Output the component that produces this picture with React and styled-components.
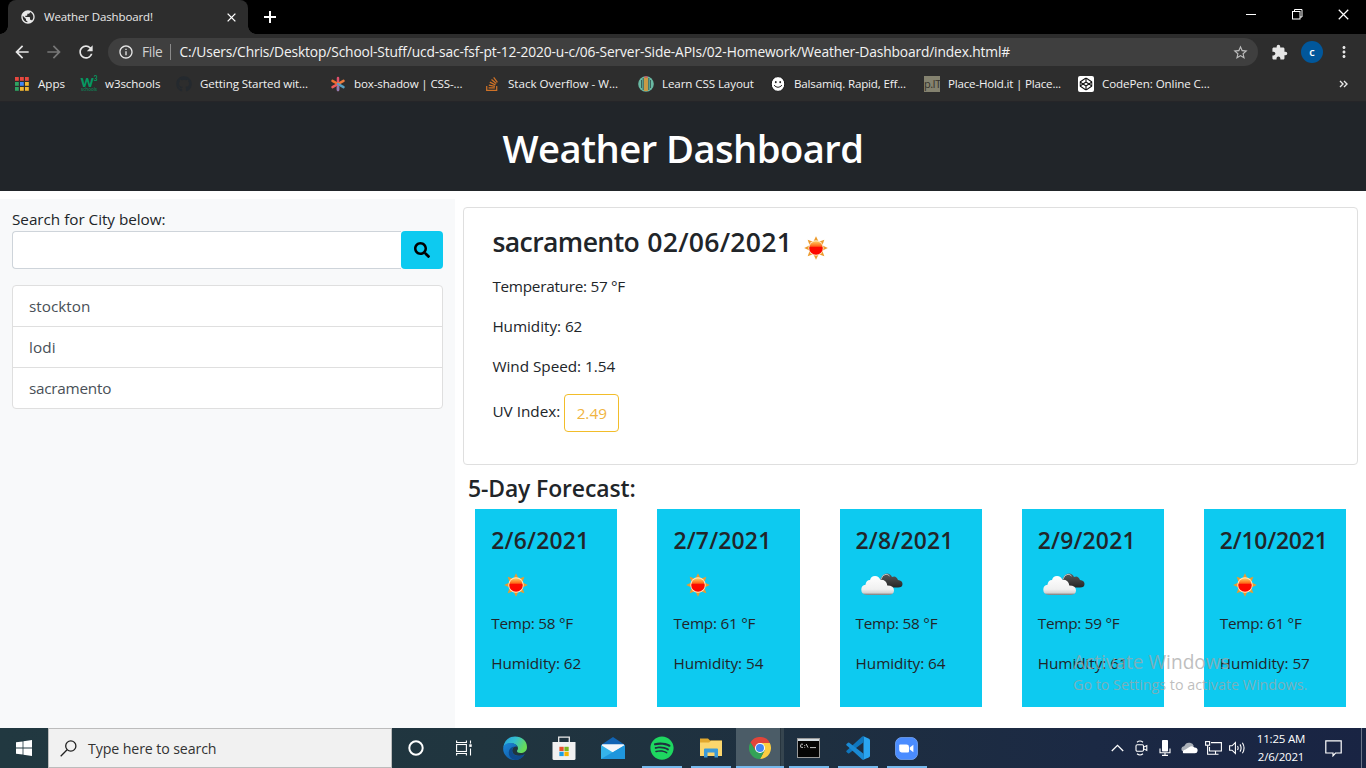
import React from "react";
import styled, { createGlobalStyle } from "styled-components";
import { FaSearch, FaStackOverflow, FaGithub, FaSpotify, FaCodepen } from "react-icons/fa";
import { MdArrowBack, MdArrowForward, MdRefresh, MdExtension, MdStarBorder, MdMoreVert, MdInfoOutline, MdPublic } from "react-icons/md";

const Global = createGlobalStyle`
  *, *::before, *::after { box-sizing: border-box; }
  html, body { margin: 0; padding: 0; }
  body {
    font-family: "Open Sans", "Noto Sans", "Liberation Sans", sans-serif;
    overflow: hidden;
    background: #fff;
  }
  svg { display: block; flex: none; }
  p, h1, h2, h3, h4 { margin: 0; }
`;

const Screen = styled.div`
  width: 1366px;
  height: 768px;
  display: flex;
  flex-direction: column;
  overflow: hidden;
  position: relative;
`;

/* ---------- Browser window ---------- */

const TabStrip = styled.div`
  height: 34px;
  background: #000;
  display: flex;
  align-items: stretch;
  padding-left: 8px;
`;

const Tab = styled.div`
  width: 240px;
  background: #2d2d2d;
  border-radius: 8px 8px 0 0;
  display: flex;
  align-items: center;
  padding: 0 12px 0 12px;
  color: #e9e9e9;
  position: relative;
  &::before, &::after {
    content: "";
    position: absolute;
    bottom: 0;
    width: 8px;
    height: 8px;
  }
  &::before { left: -8px; background: radial-gradient(circle at 0 0, #000 7.5px, #2d2d2d 8px); }
  &::after { right: -8px; background: radial-gradient(circle at 100% 0, #000 7.5px, #2d2d2d 8px); }
`;

const TabTitle = styled.span`
  flex: 1;
  margin-left: 8px;
  font-size: 11.5px;
  line-height: 16px;
  letter-spacing: -0.13px;
  white-space: nowrap;
`;

const NewTab = styled.div`
  width: 44px;
  display: flex;
  align-items: center;
  justify-content: center;
`;

const WindowButtons = styled.div`
  margin-left: auto;
  display: flex;
  height: 29px;
`;

const WindowButton = styled.div`
  width: 46px;
  display: flex;
  align-items: center;
  justify-content: center;
`;

const Toolbar = styled.div`
  height: 35px;
  background: #2d2d2d;
  display: flex;
  align-items: center;
  padding: 1px 12px 0 12px;
  color: #e6e6e6;
`;

const NavButton = styled.div`
  width: 20px;
  height: 20px;
  margin-right: 12px;
  color: ${(p) => (p.$dim ? "#777" : "#e6e6e6")};
  display: flex;
  align-items: center;
  justify-content: center;
`;

const AddressBar = styled.div`
  width: 1150px;
  height: 28px;
  border-radius: 14px;
  background: #3f3f3f;
  display: flex;
  align-items: center;
  padding: 0 9px 0 10px;
  font-size: 13.8px;
  white-space: nowrap;
`;

const Scheme = styled.span`
  margin-left: 8px;
  padding-right: 8px;
  border-right: 1px solid #8a8a8a;
  line-height: 16px;
  color: #d0d0d0;
  letter-spacing: -0.35px;
`;

const Url = styled.span`
  flex: 1;
  margin-left: 8px;
  padding-bottom: 1px;
  line-height: 18px;
  letter-spacing: -0.15px;
  color: #f3f3f3;
`;

const ToolbarActions = styled.div`
  flex: 1;
  display: flex;
  align-items: center;
  padding-left: 13px;
`;

const Avatar = styled.div`
  width: 22px;
  height: 22px;
  border-radius: 50%;
  margin: 0 12px 0 13px;
  background: #01579b;
  color: #fff;
  font-size: 11px;
  line-height: 21px;
  text-align: center;
  font-weight: 600;
`;

const BookmarksBar = styled.div`
  height: 33px;
  background: #2d2d2d;
  border-bottom: 1px solid #252528;
  display: flex;
  align-items: center;
  padding: 0 18px 3px 14px;
`;

const Bookmark = styled.div`
  width: ${(p) => p.$width}px;
  display: flex;
  align-items: center;
  gap: 8px;
  color: #f1f1f1;
  font-size: 11.6px;
  letter-spacing: ${(p) => p.$tracking || 0}px;
  line-height: 16px;
  white-space: nowrap;
`;

const PlaceholdIcon = styled.span`
  width: 16px;
  height: 16px;
  background: #84826f;
  color: #34322b;
  font: 11px/16px "Open Sans", sans-serif;
  letter-spacing: -0.5px;
  text-align: center;
`;

const Overflow = styled.span`
  margin-left: auto;
`;

/* ---------- Weather page ---------- */

const Page = styled.div`
  height: 626px;
  background: #fff;
  color: #212529;
  font-size: 15.3px;
  line-height: 24px;
  display: flex;
  flex-direction: column;
`;

const Banner = styled.header`
  height: 89px;
  background: #212529;
  color: #fff;
  display: flex;
  align-items: center;
  justify-content: center;
  padding-top: 2px;
  margin-bottom: 8px;
`;

const BannerTitle = styled.h1`
  font-size: 38.2px;
  font-weight: 600;
  line-height: 48px;
  letter-spacing: -0.56px;
`;

const Columns = styled.div`
  flex: 1;
  display: grid;
  grid-template-columns: 455px 1fr;
`;

const Sidebar = styled.aside`
  background: #f8f9fa;
  padding: 8px 12px;
`;

const SearchLabel = styled.div`
  letter-spacing: -0.04px;
`;

const SearchRow = styled.div`
  display: flex;
  margin-bottom: 16px;
`;

const CityInput = styled.input`
  flex: 1;
  height: 38px;
  border: 1px solid #ced4da;
  border-right: 0;
  border-radius: 4px 0 0 4px;
  background: #fff;
  outline: none;
`;

const SearchButton = styled.button`
  width: 42px;
  height: 38px;
  border: 0;
  padding: 0;
  border-radius: 4px;
  background: #0dcaf0;
  color: #000;
  display: flex;
  align-items: center;
  justify-content: center;
`;

const CityList = styled.div`
  border: 1px solid #dfdfdf;
  border-radius: 4px;
  background: #fff;
`;

const City = styled.div`
  height: 41px;
  padding: 8px 16px;
  color: #495057;
  letter-spacing: ${(p) => p.$tracking}px;
  &:not(:last-child) { border-bottom: 1px solid #dfdfdf; }
  &:last-child { height: 40px; }
`;

const Main = styled.main`
  padding: 8px 8px 0;
`;

const TodayCard = styled.section`
  height: 258px;
  border: 1px solid #dfdfdf;
  border-radius: 4px;
  padding: 15px 28px 0 28.4px;
`;

const TodayTitle = styled.h3`
  display: flex;
  align-items: center;
  height: 49px;
  margin-bottom: 2px;
  font-size: 26.6px;
  font-weight: 600;
`;

const TodayCity = styled.span`
  padding-bottom: 11px;
  margin-right: 8px;
  letter-spacing: -0.6px;
`;

const TodayDate = styled.span`
  padding-bottom: 11px;
  width: 144.1px;
  letter-spacing: 0.25px;
`;

const Reading = styled.p`
  margin-bottom: 16px;
  letter-spacing: ${(p) => p.$tracking || 0}px;
`;

const UvRow = styled.div`
  display: flex;
`;

const UvLabel = styled.span`
  line-height: 35px;
  margin-right: 4px;
`;

const UvBadge = styled.span`
  width: 55px;
  height: 38px;
  border: 1px solid #f2bd2a;
  border-radius: 4px;
  color: #f0b440;
  line-height: 37px;
  text-align: center;
`;

const ForecastTitle = styled.h4`
  padding: 8px 0 0 5px;
  height: 44px;
  font-size: 22.9px;
  line-height: 32px;
  font-weight: 600;
  letter-spacing: -0.1px;
`;

const ForecastGrid = styled.div`
  display: grid;
  grid-template-columns: repeat(5, 1fr);
  gap: 40px;
  padding: 0 12px 0 12.3px;
`;

const DayCard = styled.article`
  height: 198px;
  background: #0dcaf0;
  padding: 16px 0 0 16px;
  white-space: nowrap;
`;

const DayTitle = styled.h4`
  font-size: 22.9px;
  line-height: 32px;
  height: 36px;
  font-weight: 600;
  letter-spacing: ${(p) => p.$tracking || 0}px;
  & + svg { margin-top: -1px; margin-bottom: 1px; }
`;

/* ---------- Watermark ---------- */

const Watermark = styled.div`
  position: absolute;
  left: 1073px;
  top: 650px;
  color: rgba(165, 165, 165, 0.72);
  white-space: nowrap;
  pointer-events: none;
`;

const WatermarkTitle = styled.div`
  font-size: 19.1px;
  line-height: 25px;
`;

const WatermarkNote = styled.div`
  font-size: 14.3px;
  line-height: 20px;
`;

/* ---------- Taskbar ---------- */

const Taskbar = styled.footer`
  height: 40px;
  background: linear-gradient(90deg, #213840 0%, #20353f 35%, #1e2f40 60%, #1b2944 80%, #192443 100%);
  display: flex;
  color: #fff;
`;

const TaskCell = styled.div`
  width: ${(p) => p.$width || 49}px;
  height: 40px;
  position: relative;
  display: flex;
  align-items: center;
  justify-content: center;
  background: ${(p) => (p.$active ? "linear-gradient(90deg,transparent 0 1px,#4b5c67 1px 45px,#27353f 45px 46px,#36454f 46px)" : "none")};
  ${(p) => p.$active && "padding-left: 1px;"}
  &::after {
    content: "";
    display: ${(p) => (p.$running ? "block" : "none")};
    position: absolute;
    bottom: 0;
    left: ${(p) => (p.$active ? 1 : 5)}px;
    right: ${(p) => (p.$active ? 0 : 4)}px;
    height: 2px;
    background: #76b9ed;
  }
`;

const TaskSearch = styled.div`
  width: 344px;
  height: 40px;
  margin-right: ${(p) => p.$gap || 0}px;
  background: #f1f1f1;
  border: 1px solid #bcbcbc;
  display: flex;
  align-items: center;
  padding-left: 11px;
  gap: 11px;
  color: #333;
  font-size: 14.2px;
  letter-spacing: -0.11px;
`;

const PinnedApps = styled.div`
  display: flex;
  margin-left: 2px;
`;

const Tray = styled.div`
  margin-left: auto;
  display: flex;
  align-items: center;
`;

const TrayIcon = styled.div`
  width: 24px;
  display: flex;
  justify-content: center;
`;

const Clock = styled.div`
  width: 64px;
  text-align: center;
  font-size: 11.5px;
  line-height: 18px;
  letter-spacing: -0.2px;
  white-space: nowrap;
`;

const ActionCenter = styled.div`
  width: 48px;
  height: 40px;
  display: flex;
  align-items: center;
  justify-content: center;
  padding-right: 8px;
`;

const ShowDesktop = styled.div`
  width: 5px;
  height: 40px;
  border-left: 1px solid #6c7488;
`;

/* ---------- Drawings ---------- */

const Sun = () => (
  <svg width="50" height="50" viewBox="0 0 50 50">
    <defs>
      <linearGradient id="sunFill" x1="0" y1="0" x2="0" y2="1">
        <stop offset="0" stopColor="#ffd060" />
        <stop offset="0.36" stopColor="#ff6a1a" />
        <stop offset="0.46" stopColor="#fb0d00" />
        <stop offset="1" stopColor="#ff0600" />
      </linearGradient>
    </defs>
    <g fill="#ec9b2d">
      {[0, 45, 90, 135, 180, 225, 270, 315].map((a) => (
        <path key={a} d="M25 13.2 L27.5 18.5 L22.5 18.5 Z" transform={`rotate(${a} 25 25)`} />
      ))}
    </g>
    <circle cx="25" cy="25" r="7.7" fill="#fde9c8" />
    <circle cx="25" cy="25" r="6.8" fill="url(#sunFill)" />
  </svg>
);

const Clouds = () => (
  <svg width="50" height="50" viewBox="0 0 50 50">
    <defs>
      <linearGradient id="cloudFill" x1="0" y1="0" x2="0" y2="1">
        <stop offset="0" stopColor="#fff" />
        <stop offset="0.7" stopColor="#f0f0f0" />
        <stop offset="0.88" stopColor="#d5d5d5" />
        <stop offset="1" stopColor="#777" />
      </linearGradient>
      <linearGradient id="darkFill" x1="0" y1="0" x2="0" y2="1">
        <stop offset="0" stopColor="#5a5a5a" />
        <stop offset="1" stopColor="#262626" />
      </linearGradient>
    </defs>
    <path d="M24 21 Q26 13.5 31 13.5 Q34.5 13.5 36 17 Q40 15 42 20 Q46.5 20.5 46.5 24 Q46.5 27.5 42 27.5 H28 Z" fill="url(#darkFill)" />
    <path d="M24.8 19.5 Q26.5 14.3 30 14.3 Q32 14.2 33.5 16" fill="none" stroke="#d9d9d9" strokeWidth="0.8" />
    <path d="M11 35 Q5.3 34.6 5.3 29.7 Q5.3 25.2 9.5 24.8 Q10 20 14 20 Q15 16 19 16 Q23 16 24.3 19.8 Q30.5 19.5 31.3 25.6 Q38 25.6 38 30.5 Q38 34.6 33 35 Z" fill="url(#cloudFill)" />
  </svg>
);

const AppsIcon = () => {
  const colors = ["#e8483f", "#e8483f", "#e8483f", "#2fa362", "#4285f4", "#f2b632", "#2fa362", "#f2b632", "#f2b632"];
  return (
    <svg width="16" height="16" viewBox="0 0 16 16">
      {colors.map((c, i) => (
        <rect key={i} x={1 + (i % 3) * 5} y={1 + Math.floor(i / 3) * 5} width="3.8" height="3.8" fill={c} />
      ))}
    </svg>
  );
};

const SchoolsIcon = () => (
  <svg width="16" height="17" viewBox="0 0 16 17" fill="#059862" overflow="visible">
    <text x="-0.4" y="11.5" fontFamily="Lato, sans-serif" fontWeight="900" fontSize="16.5" textLength="13.2" lengthAdjust="spacingAndGlyphs">w</text>
    <text x="12.6" y="5.6" fontFamily="Lato, sans-serif" fontWeight="700" fontSize="7">3</text>
    <text x="0" y="16.4" fontFamily="Open Sans, sans-serif" fontWeight="600" fontSize="5" fillOpacity="0.8" textLength="16" lengthAdjust="spacingAndGlyphs">schools</text>
  </svg>
);

const StarMark = () => (
  <svg width="16" height="16" viewBox="0 0 16 16" strokeWidth="2.5" strokeLinecap="round">
    <path d="M8 2v12" stroke="#e0506c" />
    <path d="M2.5 4.8L8 8" stroke="#f0702e" />
    <path d="M13.5 4.8L8 8" stroke="#ef7a3c" />
    <path d="M2.5 11.2L8 8" stroke="#ee5a5a" />
    <path d="M13.5 11.2L8 8" stroke="#5a9fc0" />
    <path d="M8 11v3" stroke="#8d7db0" />
  </svg>
);

const LearnIcon = () => (
  <svg width="16" height="16" viewBox="0 0 16 16">
    <circle cx="8" cy="8" r="7.8" fill="#69b9a3" />
    <rect x="6" y="1" width="4" height="14" fill="#c99a45" />
    <path d="M3.5 4v8M5.2 2v12M10.8 2v12M12.5 4v8" stroke="#35544f" strokeWidth="0.9" />
    <path d="M6.5 1h3" stroke="#c8536b" strokeWidth="1.5" />
  </svg>
);

const Smiley = () => (
  <svg width="16" height="16" viewBox="0 0 16 16">
    <ellipse cx="8" cy="8" rx="6.8" ry="7.4" fill="#fff" stroke="#111" />
    <ellipse cx="5.8" cy="6.2" rx="0.9" ry="1.1" fill="#222" />
    <ellipse cx="10.2" cy="6.2" rx="0.9" ry="1.1" fill="#222" />
    <path d="M4 9.2 Q8 13.4 12 9.2" fill="none" stroke="#222" />
  </svg>
);

const CodepenBox = () => (
  <svg width="16" height="16" viewBox="0 0 16 16">
    <rect width="16" height="16" rx="2" fill="#fff" />
    <FaCodepen x="1.5" y="1.5" size={13} color="#111" />
  </svg>
);

const CloseIcon = ({ size = 9, stroke = 1.5 }) => (
  <svg width={size} height={size} viewBox="0 0 10 10" stroke="#fff" strokeWidth={stroke}>
    <path d="M0.7 0.7L9.3 9.3M9.3 0.7L0.7 9.3" />
  </svg>
);

const PlusIcon = () => (
  <svg width="12" height="12" viewBox="0 0 12 12" stroke="#fff" strokeWidth="2">
    <path d="M6 0v12M0 6h12" />
  </svg>
);

const MinimizeIcon = () => (
  <svg width="10" height="10" viewBox="0 0 10 10" stroke="#fff"><path d="M0 4.5h10" /></svg>
);

const RestoreIcon = () => (
  <svg width="11" height="11" viewBox="0 0 11 11" stroke="#fff" fill="none">
    <rect x="0.5" y="2.5" width="7.5" height="7.5" />
    <path d="M2.5 2.5v-2h7.5v7.5h-2" />
  </svg>
);

const WindowsLogo = () => (
  <svg width="16" height="16" viewBox="0 0 16 16" fill="#fff">
    <path d="M0 2.3L6.6 1.4V7.6H0ZM7.4 1.3L16 0V7.6H7.4ZM0 8.4H6.6V14.6L0 13.7ZM7.4 8.4H16V16L7.4 14.8Z" />
  </svg>
);

const LoupeIcon = () => (
  <svg width="17" height="17" viewBox="0 0 17 17" fill="none" stroke="#222" strokeWidth="1.3">
    <circle cx="10.8" cy="6" r="5.1" />
    <path d="M7.1 9.8L0.7 16.2" />
  </svg>
);

const CortanaIcon = () => (
  <svg width="16" height="16" viewBox="0 0 16 16"><circle cx="8" cy="8" r="6.7" fill="none" stroke="#fff" strokeWidth="2" /></svg>
);

const TaskViewIcon = () => (
  <svg width="16" height="16" viewBox="0 0 16 16" fill="none" stroke="#fff" strokeWidth="1.1">
    <rect x="0.6" y="4.5" width="9.8" height="7" />
    <path d="M0.6 0.5V2.5H10.4V0.5M0.6 15.5V13.5H10.4V15.5M14.5 0.5v3M14.5 8.5v7" />
    <rect x="13.3" y="4.3" width="2.4" height="2.6" fill="#fff" stroke="none" />
  </svg>
);

const EdgeIcon = () => (
  <svg width="24" height="24" viewBox="0 0 24 24">
    <defs>
      <linearGradient id="edgeTop" x1="0" y1="0" x2="1" y2="0.4">
        <stop offset="0" stopColor="#249fe0" /><stop offset="0.5" stopColor="#35bfcf" /><stop offset="1" stopColor="#67dc58" />
      </linearGradient>
      <linearGradient id="edgeBase" x1="0" y1="0" x2="1" y2="1">
        <stop offset="0" stopColor="#1b86d8" /><stop offset="1" stopColor="#0c4f96" />
      </linearGradient>
    </defs>
    <path d="M0.3 11 C1.5 4 6 0.5 12 0.5 C19 0.5 24 5 24 11 C24 15 21 17 17.5 17 C15 17 13.8 16 14 14.8 C16.5 12 14 7.5 9 7.5 C5 7.5 1.5 9 0.3 11Z" fill="url(#edgeTop)" />
    <path d="M0.2 12 C0.5 8.5 4 7 7.3 7 C11 7 13.8 8.6 14.5 11 C12 9.8 9.2 11.5 9.2 14.6 C9.2 18.5 14 22 21.7 18.2 C19.5 21.8 16 24 12 24 C5 24 -0.3 18.5 0.2 12Z" fill="url(#edgeBase)" />
    <path d="M9.2 14.5C9 18.5 14 22 21.7 18.2 C19.5 21.8 16 24 12 24 C8 23 5.5 20 5.8 16 C6 13.5 8 11 11 10.6 C9.8 11.5 9.2 13 9.2 14.5Z" fill="#0f4a8c" />
  </svg>
);

const StoreIcon = () => (
  <svg width="24" height="24" viewBox="0 0 24 24">
    <path d="M6.7 6.5V1.2H17.3V6.5" fill="none" stroke="#ececec" strokeWidth="1.3" />
    <path d="M0.5 6H23.5V22.5Q23.5 24 22 24H2Q0.5 24 0.5 22.5Z" fill="#f1f1f1" />
    <rect x="7.4" y="10.8" width="4.3" height="4.3" fill="#e5502b" />
    <rect x="12.4" y="10.8" width="4.3" height="4.3" fill="#7ab51d" />
    <rect x="7.4" y="15.8" width="4.3" height="4.3" fill="#1c9ee5" />
    <rect x="12.4" y="15.8" width="4.3" height="4.3" fill="#f5b400" />
  </svg>
);

const MailIcon = () => (
  <svg width="24" height="24" viewBox="0 0 24 24">
    <path d="M0 9L12 1L24 9V13H0Z" fill="#1164b4" />
    <path d="M1 8.5H23V16L12 19L1 16Z" fill="#f4f7fa" />
    <path d="M0 9L12 16.5L24 9V23H0Z" fill="#35b3ea" />
    <path d="M24 9L0 23H24Z" fill="#1f96dc" />
    <path d="M1 8.6H23L12 15.6Z" fill="#f4f7fa" />
  </svg>
);

const FolderIcon = () => (
  <svg width="22" height="20" viewBox="0 0 22 20">
    <path d="M0 0.5H8L10 2.5H22V18H0Z" fill="#e2a82e" />
    <path d="M0 4.5H9L11 2.8H22V18H0Z" fill="#fbd66d" />
    <path d="M4 19.5V11.5Q4 10.5 5 10.5H17Q18 10.5 18 11.5V19.5H14.5V14.5H7.5V19.5Z" fill="#3a9ad9" />
  </svg>
);

const ChromeIcon = () => (
  <svg width="22" height="22" viewBox="0 0 24 24">
    <path d="M12 6.5H22.7A12 12 0 0 1 12 24L17 14.8Z" fill="#fccd41" />
    <path d="M7.2 14.8L1.6 6A12 12 0 0 1 22.7 6.5H12Z" fill="#e1453a" />
    <path d="M7.2 14.8L1.6 6A12 12 0 0 0 12 24L17 14.8Z" fill="#34a257" />
    <circle cx="12" cy="12" r="5.5" fill="#fff" />
    <circle cx="12" cy="12" r="4.4" fill="#4285f4" />
  </svg>
);

const TerminalIcon = () => (
  <svg width="23" height="20" viewBox="0 0 23 20">
    <rect x="0.5" y="0.5" width="22" height="19" fill="#050505" stroke="#9a9a9a" />
    <rect x="1" y="1" width="21" height="2" fill="#d5dde2" />
    <path d="M6 6.2H4.4Q3.6 6.2 3.6 8T4.4 9.4H6M7.7 7v.9M7.7 8.9v.8M9.2 6L11 9.6M13 9.6h6" stroke="#ddd" fill="none" strokeWidth="0.9" />
  </svg>
);

const CodeIcon = () => (
  <svg width="24" height="24" viewBox="0 0 24 24">
    <path d="M17.5 0.2L23 2.7Q24 3.2 24 4.3V19.7Q24 20.8 23 21.3L17.5 23.8Z" fill="#2aa5f0" />
    <path d="M17.5 6.2L3.3 17.3Q2.6 17.8 2 17.3L0.5 16Q0 15.3 0.5 14.7L16.2 0.5Q17 -0.1 18 0.4Z" fill="#0f76bd" />
    <path d="M17.5 17.8L3.3 6.7Q2.6 6.2 2 6.7L0.5 8Q0 8.7 0.5 9.3L16.2 23.5Q17 24.1 18 23.6Z" fill="#1a8ad4" />
  </svg>
);

const MeetingIcon = () => (
  <svg width="23" height="23" viewBox="0 0 23 23">
    <rect x="0.4" y="0.4" width="22.2" height="22.2" rx="6.5" fill="#4a8cff" stroke="#7aa9f8" strokeWidth="0.8" />
    <path d="M4.2 8.3Q4.2 7.6 5 7.6H11.5Q14 7.6 14 10V14.6Q14 15.4 13.2 15.4H6.7Q4.2 15.4 4.2 13Z" fill="#fff" />
    <path d="M14.8 10.4L18.4 7.8V15.2L14.8 12.6Z" fill="#fff" />
  </svg>
);

const ChevronIcon = () => (
  <svg width="13" height="8" viewBox="0 0 13 8" fill="none" stroke="#fff" strokeWidth="1.3"><path d="M0.8 7L6.5 1.3L12.2 7" /></svg>
);

const CameraIcon = () => (
  <svg width="13" height="16" viewBox="0 0 13 16" fill="none" stroke="#fff" strokeWidth="1.1">
    <rect x="1" y="4.8" width="7.5" height="6.4" rx="1.2" />
    <path d="M8.5 7.2L11.8 5.6V10.4L8.5 8.8M2 2.2Q5 -0.2 8 2.2M2 13.8Q5 16.2 8 13.8" />
  </svg>
);

const MicIcon = () => (
  <svg width="12" height="16" viewBox="0 0 12 16">
    <rect x="3" y="0" width="6" height="11.5" rx="0.8" fill="#fff" />
    <path d="M1 8.5V12.8H11V8.5M6 13V15.5M3 15.4H9" fill="none" stroke="#fff" strokeWidth="1.1" />
  </svg>
);

const CloudIcon = () => (
  <svg width="17" height="12" viewBox="0 0 17 12">
    <path d="M1 9Q-1 5 3.3 4Q5 0 9 0.8Q12 1.3 12.8 4L8 9Z" fill="#aab0b8" />
    <path d="M2 11Q1 8 4.5 7.4L8 5.3Q11 3.2 13.5 5.6Q17 6 16.6 9Q16.2 11.3 14 11.3H3.5Q2.3 11.3 2 11Z" fill="#fff" />
  </svg>
);

const NetworkIcon = () => (
  <svg width="17" height="14" viewBox="0 0 17 14" fill="none" stroke="#fff" strokeWidth="1.1">
    <rect x="0.6" y="0.6" width="4" height="3.6" />
    <path d="M6 1.6H16.4V10H4.5V6M2.6 4.2V13.2H6.5M10.5 10V13M6.5 13.2H13.5" />
  </svg>
);

const SpeakerIcon = () => (
  <svg width="17" height="14" viewBox="0 0 17 14" fill="none" stroke="#fff" strokeWidth="1.1">
    <path d="M0.6 4.8H3L6.4 1.6V12.4L3 9.2H0.6Z" />
    <path d="M8.5 5Q9.8 7 8.5 9M11 3.4Q13.2 7 11 10.6M13.4 1.7Q16.7 7 13.4 12.3" />
  </svg>
);

const NotificationIcon = () => (
  <svg width="17" height="17" viewBox="0 0 17 17" fill="none" stroke="#fff" strokeWidth="1.2">
    <path d="M0.8 0.8H16.2V13H10.5L8 15.8V13H0.8Z" />
  </svg>
);

/* ---------- Data ---------- */

const bookmarks = [
  { label: "Apps", width: 67, icon: <AppsIcon /> },
  { label: "w3schools", width: 95, tracking: -0.1, icon: <SchoolsIcon /> },
  { label: "Getting Started wit...", width: 154, tracking: -0.1, icon: <FaGithub size={16} color="#24292e" /> },
  { label: "box-shadow | CSS-...", width: 154, tracking: -0.15, icon: <StarMark /> },
  { label: "Stack Overflow - W...", width: 154, tracking: 0, icon: <FaStackOverflow size={16} color="#cf7227" /> },
  { label: "Learn CSS Layout", width: 132, tracking: -0.1, icon: <LearnIcon /> },
  { label: "Balsamiq. Rapid, Eff...", width: 154, tracking: -0.17, icon: <Smiley /> },
  { label: "Place-Hold.it | Place...", width: 154, tracking: -0.2, icon: <PlaceholdIcon>p.IT</PlaceholdIcon> },
  { label: "CodePen: Online C...", width: 154, tracking: -0.1, icon: <CodepenBox /> },
];

const cities = [
  { name: "stockton", tracking: 0 },
  { name: "lodi", tracking: 0.15 },
  { name: "sacramento", tracking: -0.25 },
];

const forecast = [
  { date: "2/6/2021", icon: <Sun />, temp: 58, humidity: 62 },
  { date: "2/7/2021", icon: <Sun />, temp: 61, humidity: 54 },
  { date: "2/8/2021", icon: <Clouds />, temp: 58, humidity: 64 },
  { date: "2/9/2021", icon: <Clouds />, temp: 59, humidity: 61 },
  { date: "2/10/2021", icon: <Sun />, temp: 61, humidity: 57 },
];

const apps = [
  { id: "edge", icon: <EdgeIcon /> },
  { id: "store", icon: <StoreIcon /> },
  { id: "mail", icon: <MailIcon /> },
  { id: "music", icon: <FaSpotify size={24} color="#1ed760" />, running: true },
  { id: "files", icon: <FolderIcon />, running: true },
  { id: "browser", icon: <ChromeIcon />, running: true, active: true },
  { id: "terminal", icon: <TerminalIcon />, running: true },
  { id: "code", icon: <CodeIcon />, running: true },
  { id: "meeting", icon: <MeetingIcon />, running: true },
];

export default function App() {
  return (
    <Screen>
      <Global />
      <TabStrip>
        <Tab>
          <MdPublic size={16} />
          <TabTitle>Weather Dashboard!</TabTitle>
          <CloseIcon />
        </Tab>
        <NewTab><PlusIcon /></NewTab>
        <WindowButtons>
          <WindowButton><MinimizeIcon /></WindowButton>
          <WindowButton><RestoreIcon /></WindowButton>
          <WindowButton><CloseIcon size={11} stroke={1.1} /></WindowButton>
        </WindowButtons>
      </TabStrip>
      <Toolbar>
        <NavButton><MdArrowBack size={20} /></NavButton>
        <NavButton $dim><MdArrowForward size={20} /></NavButton>
        <NavButton><MdRefresh size={20} /></NavButton>
        <AddressBar>
          <MdInfoOutline size={16} />
          <Scheme>File</Scheme>
          <Url>C:/Users/Chris/Desktop/School-Stuff/ucd-sac-fsf-pt-12-2020-u-c/06-Server-Side-APIs/02-Homework/Weather-Dashboard/index.html#</Url>
          <MdStarBorder size={17} color="#bdbdbd" />
        </AddressBar>
        <ToolbarActions>
          <MdExtension size={17} />
          <Avatar>c</Avatar>
          <MdMoreVert size={18} />
        </ToolbarActions>
      </Toolbar>
      <BookmarksBar>
        {bookmarks.map((b) => (
          <Bookmark key={b.label} $width={b.width} $tracking={b.tracking}>
            {b.icon}
            {b.label}
          </Bookmark>
        ))}
        <Overflow>
          <svg width="9" height="8" viewBox="0 0 9 8" fill="none" stroke="#e8e8e8" strokeWidth="1.4">
            <path d="M1 1L4 4L1 7M5 1L8 4L5 7" />
          </svg>
        </Overflow>
      </BookmarksBar>

      <Page>
        <Banner><BannerTitle>Weather Dashboard</BannerTitle></Banner>
        <Columns>
          <Sidebar>
            <SearchLabel>Search for City below:</SearchLabel>
            <SearchRow>
              <CityInput />
              <SearchButton><FaSearch size={16} /></SearchButton>
            </SearchRow>
            <CityList>
              {cities.map((c) => <City key={c.name} $tracking={c.tracking}>{c.name}</City>)}
            </CityList>
          </Sidebar>
          <Main>
            <TodayCard>
              <TodayTitle>
                <TodayCity>sacramento</TodayCity>
                <TodayDate>02/06/2021</TodayDate>
                <Sun />
              </TodayTitle>
              <Reading $tracking={-0.27}>Temperature: 57 °F</Reading>
              <Reading $tracking={-0.05}>Humidity: 62</Reading>
              <Reading $tracking={-0.03}>Wind Speed: 1.54</Reading>
              <UvRow>
                <UvLabel>UV Index:</UvLabel>
                <UvBadge>2.49</UvBadge>
              </UvRow>
            </TodayCard>
            <ForecastTitle>5-Day Forecast:</ForecastTitle>
            <ForecastGrid>
              {forecast.map((d) => (
                <DayCard key={d.date}>
                  <DayTitle $tracking={d.date.length > 8 ? -0.2 : 0.2}>{d.date}</DayTitle>
                  {d.icon}
                  <Reading $tracking={-0.25}>Temp: {d.temp} °F</Reading>
                  <Reading $tracking={-0.05}>Humidity: {d.humidity}</Reading>
                </DayCard>
              ))}
            </ForecastGrid>
          </Main>
        </Columns>
      </Page>

      <Taskbar>
        <TaskCell $width={48}><WindowsLogo /></TaskCell>
        <TaskSearch><LoupeIcon />Type here to search</TaskSearch>
        <TaskCell $width={48}><CortanaIcon /></TaskCell>
        <TaskCell $width={48}><TaskViewIcon /></TaskCell>
        <PinnedApps>
          {apps.map((a) => (
            <TaskCell key={a.id} $running={a.running} $active={a.active}>{a.icon}</TaskCell>
          ))}
        </PinnedApps>
        <Tray>
          <TrayIcon><ChevronIcon /></TrayIcon>
          <TrayIcon><CameraIcon /></TrayIcon>
          <TrayIcon><MicIcon /></TrayIcon>
          <TrayIcon><CloudIcon /></TrayIcon>
          <TrayIcon><NetworkIcon /></TrayIcon>
          <TrayIcon><SpeakerIcon /></TrayIcon>
          <Clock><div>11:25 AM</div><div>2/6/2021</div></Clock>
          <ActionCenter><NotificationIcon /></ActionCenter>
          <ShowDesktop />
        </Tray>
      </Taskbar>

      <Watermark>
        <WatermarkTitle>Activate Windows</WatermarkTitle>
        <WatermarkNote>Go to Settings to activate Windows.</WatermarkNote>
      </Watermark>
    </Screen>
  );
}
